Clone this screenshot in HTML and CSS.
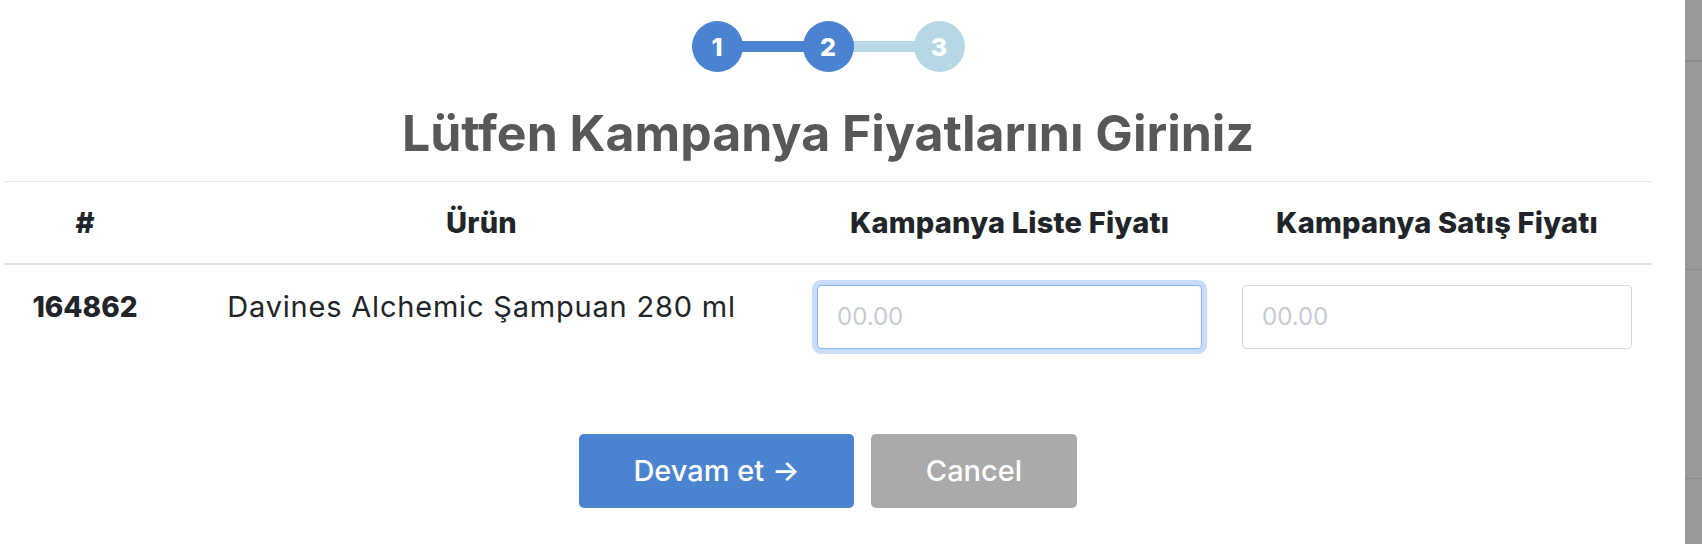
FILE: index.html
```html
<!DOCTYPE html>
<html>
<head>
  <meta charset="UTF-8">
  <title>Kampanya Fiyatları</title>
  <link rel="stylesheet" href="styles.css">
</head>
<body>
  <div class="modal">
    <div class="modal-content">
      <div class="stepper">
        <div class="step done">1</div>
        <div class="step-line done"></div>
        <div class="step done">2</div>
        <div class="step-line"></div>
        <div class="step">3</div>
      </div>

      <h2 class="modal-title">Lütfen Kampanya Fiyatlarını Giriniz</h2>

      <table class="price-table">
        <colgroup>
          <col class="col-id">
          <col class="col-name">
          <col class="col-list">
          <col class="col-sale">
        </colgroup>
        <thead>
          <tr>
            <th>#</th>
            <th>Ürün</th>
            <th>Kampanya Liste Fiyatı</th>
            <th>Kampanya Satış Fiyatı</th>
          </tr>
        </thead>
        <tbody>
          <tr>
            <td class="product-id">164862</td>
            <td class="product-name">Davines Alchemic Şampuan 280 ml</td>
            <td><input class="price-input focused" type="text" placeholder="00.00"></td>
            <td><input class="price-input" type="text" placeholder="00.00"></td>
          </tr>
        </tbody>
      </table>

      <div class="actions">
        <button class="btn btn-primary">Devam et →</button>
        <button class="btn btn-cancel">Cancel</button>
      </div>
    </div>
  </div>
  <div class="backdrop"></div>
</body>
</html>
```

FILE: styles.css
```css
:root {
  --blue: #4a83cf;
  --blue-light: #b6d8e4;
  --text-dark: #212529;
  --title: #58585a;
  --line: #e6e6e6;
}

* {
  margin: 0;
  padding: 0;
  box-sizing: border-box;
}

body {
  height: 100vh;
  display: flex;
  font-family: 'Inter', 'Noto Sans', sans-serif;
  color: var(--text-dark);
  background: #fff;
  overflow: hidden;
}

.modal {
  flex: 1;
  background: #fff;
}

.modal-content {
  width: 1648px;
  margin-left: 4px;
}

/* right side, page behind the modal */
.backdrop {
  width: 17px;
  background:
    linear-gradient(#8a8a8a, #8a8a8a) 0 60px / 100% 2px no-repeat,
    linear-gradient(#8a8a8a, #8a8a8a) 0 269px / 100% 1px no-repeat,
    linear-gradient(#8a8a8a, #8a8a8a) 0 478px / 100% 1px no-repeat,
    #999;
}

/* Stepper */
.stepper {
  display: flex;
  justify-content: center;
  align-items: center;
  padding-top: 21px;
}

.step {
  width: 51px;
  height: 51px;
  border-radius: 50%;
  background: var(--blue-light);
  color: #fff;
  font-size: 25px;
  font-weight: 800;
  display: flex;
  align-items: center;
  justify-content: center;
  position: relative;
  z-index: 1;
}

.step.done {
  background: var(--blue);
}

.step-line {
  width: 62px;
  height: 11px;
  margin: 0 -1px;
  background: var(--blue-light);
}

.step-line.done {
  background: var(--blue);
}

.modal-title {
  margin-top: 31px;
  padding-bottom: 18px;
  text-align: center;
  font-size: 50px;
  line-height: 60px;
  font-weight: 700;
  color: var(--title);
}

/* Table */
.price-table {
  width: 100%;
  border-collapse: collapse;
  table-layout: fixed;
  border-top: 1px solid var(--line);
}

.col-id { width: 162px; }
.col-name { width: 631px; }
.col-list { width: 425px; }
.col-sale { width: 430px; }

.price-table th {
  height: 82px;
  font-size: 29px;
  font-weight: 800;
  letter-spacing: 0.2px;
  text-align: center;
  vertical-align: middle;
  border-bottom: 2px solid #dee2e6;
}

.price-table td {
  padding: 20px 20px;
  font-size: 29px;
  line-height: 44px;
  text-align: center;
  vertical-align: top;
}

.price-table td.product-id {
  font-size: 28px;
  font-weight: 800;
}

.price-table td.product-name {
  letter-spacing: 0.8px;
}

.price-input {
  width: 100%;
  height: 64px;
  padding: 0 19px;
  font-family: 'Inter', sans-serif;
  font-size: 24px;
  color: var(--text-dark);
  border: 1px solid #d9d9d9;
  border-radius: 4px;
  outline: none;
  display: block;
}

.price-input::placeholder {
  color: #c6cbd4;
}

.price-input.focused {
  border-color: #86b7fe;
  box-shadow: 0 0 0 5px #cadcfc;
}

/* Buttons */
.actions {
  display: flex;
  justify-content: center;
  gap: 17px;
  margin-top: 65px;
}

.btn {
  height: 74px;
  border: none;
  border-radius: 5px;
  color: #fff;
  font-family: 'Inter', sans-serif;
  font-size: 29px;
  font-weight: 500;
  cursor: pointer;
}

.btn-primary {
  width: 275px;
  background: var(--blue);
}

.btn-cancel {
  width: 206px;
  background: #aaaaaa;
}
```
